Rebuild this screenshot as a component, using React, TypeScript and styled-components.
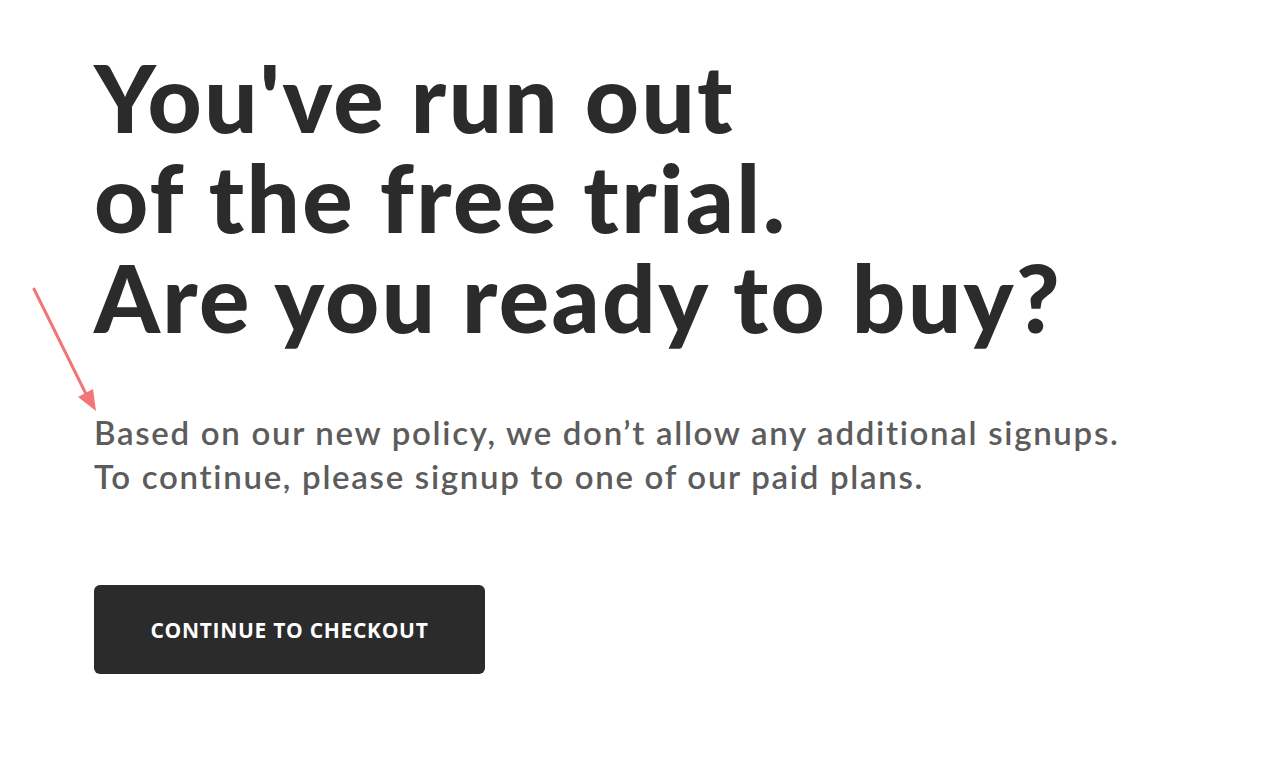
import styled, { createGlobalStyle } from "styled-components";

const GlobalStyle = createGlobalStyle`
  html, body {
    margin: 0;
    padding: 0;
    background: #ffffff;
  }
  body {
    font-family: "Lato", "Liberation Sans", sans-serif;
  }
`;

const App = () => {
  return (
    <Page>
      <GlobalStyle />
      <Content>
        <Heading>
          You've run out
          <br />
          of the free trial.
          <br />
          Are you ready to buy?
        </Heading>
        <Description>
          Based on our new policy, we don’t allow any additional signups.
          <br />
          To continue, please signup to one of our paid plans.
        </Description>
        <CheckoutButton>Continue to checkout</CheckoutButton>
      </Content>
      <Pointer width="80" height="130" viewBox="0 0 80 130">
        <line x1="4" y1="3" x2="56" y2="108" stroke="#f47575" strokeWidth="3" strokeLinecap="round" />
        <polygon points="66,125 48,111 63,103" fill="#f47575" />
      </Pointer>
    </Page>
  );
};

const Page = styled.div`
  position: relative;
  width: 1280px;
  height: 779px;
  overflow: hidden;
`;
const Content = styled.div`
  display: flex;
  flex-direction: column;
  align-items: flex-start;
  padding: 47px 0 0 94px;
`;
const Heading = styled.h1`
  margin: 0;
  font-family: "Lato", sans-serif;
  font-weight: 900;
  font-size: 94px;
  line-height: 100px;
  letter-spacing: 2.4px;
  color: #2b2b2b;
`;
const Description = styled.p`
  margin: 63px 0 0;
  font-family: "Lato", sans-serif;
  font-weight: 600;
  font-size: 33px;
  line-height: 44px;
  letter-spacing: 1.7px;
  color: #5c5c5c;
`;
const CheckoutButton = styled.button`
  margin-top: 87px;
  width: 391px;
  height: 89px;
  border: none;
  border-radius: 6px;
  background-color: #2b2b2b;
  color: #ffffff;
  font-family: "Open Sans", sans-serif;
  font-weight: 700;
  font-size: 21px;
  text-transform: uppercase;
  letter-spacing: 0.7px;
  cursor: pointer;
`;
const Pointer = styled.svg`
  position: absolute;
  left: 30px;
  top: 286px;
`;

export default App;
